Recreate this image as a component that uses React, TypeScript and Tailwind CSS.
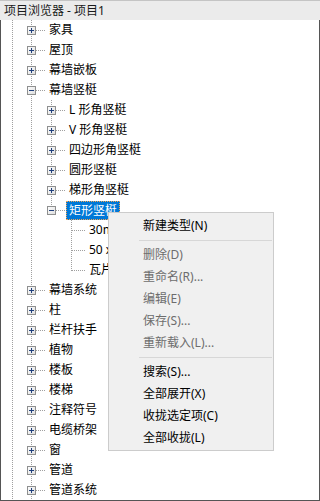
import React from "react";

type Row = {
  label: string;
  level: 1 | 2 | 3;
  box?: "plus" | "minus";
  last?: boolean;
  selected?: boolean;
};

const rows: Row[] = [
  { label: "家具", level: 1, box: "plus" },
  { label: "屋顶", level: 1, box: "plus" },
  { label: "幕墙嵌板", level: 1, box: "plus" },
  { label: "幕墙竖梃", level: 1, box: "minus" },
  { label: "L 形角竖梃", level: 2, box: "plus" },
  { label: "V 形角竖梃", level: 2, box: "plus" },
  { label: "四边形角竖梃", level: 2, box: "plus" },
  { label: "圆形竖梃", level: 2, box: "plus" },
  { label: "梯形角竖梃", level: 2, box: "plus" },
  { label: "矩形竖梃", level: 2, box: "minus", last: true, selected: true },
  { label: "30mm 正方形", level: 3 },
  { label: "50 x 150mm", level: 3 },
  { label: "瓦片", level: 3, last: true },
  { label: "幕墙系统", level: 1, box: "plus" },
  { label: "柱", level: 1, box: "plus" },
  { label: "栏杆扶手", level: 1, box: "plus" },
  { label: "植物", level: 1, box: "plus" },
  { label: "楼板", level: 1, box: "plus" },
  { label: "楼梯", level: 1, box: "plus" },
  { label: "注释符号", level: 1, box: "plus" },
  { label: "电缆桥架", level: 1, box: "plus" },
  { label: "窗", level: 1, box: "plus" },
  { label: "管道", level: 1, box: "plus" },
  { label: "管道系统", level: 1, box: "plus" },
];

const menu: ({ label: string; disabled?: boolean } | "sep")[] = [
  { label: "新建类型(N)" },
  "sep",
  { label: "删除(D)", disabled: true },
  { label: "重命名(R)...", disabled: true },
  { label: "编辑(E)", disabled: true },
  { label: "保存(S)...", disabled: true },
  { label: "重新载入(L)...", disabled: true },
  "sep",
  { label: "搜索(S)..." },
  { label: "全部展开(X)" },
  { label: "收拢选定项(C)" },
  { label: "全部收拢(L)" },
];

const dot = { stroke: "#a0a0a0", strokeDasharray: "1 1", shapeRendering: "crispEdges" as const };

// vertical guide for an ancestor that still has siblings below
function Guide({ w = 20, x = 9, on = true }: { w?: number; x?: number; on?: boolean }) {
  return (
    <svg width={w} height={20} className="block shrink-0">
      {on && <line x1={x + 0.5} y1={0} x2={x + 0.5} y2={20} {...dot} />}
    </svg>
  );
}

function Connector({ box, last }: { box?: "plus" | "minus"; last?: boolean }) {
  return (
    <svg width={20} height={20} className="block shrink-0">
      <defs>
        <linearGradient id="bx" x1="0" y1="0" x2="1" y2="1">
          <stop offset="0" stopColor="#ffffff" />
          <stop offset="1" stopColor="#dcdcdc" />
        </linearGradient>
      </defs>
      <line x1={9.5} y1={0} x2={9.5} y2={last ? 11 : 20} {...dot} />
      <line x1={10} y1={10.5} x2={20} y2={10.5} {...dot} />
      {box && (
        <g shapeRendering="crispEdges">
          <rect x={5.5} y={6.5} width={8} height={8} fill="url(#bx)" stroke="#8e8f8f" />
          <line x1={7} y1={10.5} x2={12} y2={10.5} stroke="#1f3f7c" />
          {box === "plus" && <line x1={9.5} y1={8} x2={9.5} y2={13} stroke="#1f3f7c" />}
        </g>
      )}
    </svg>
  );
}

function Tail() {
  return (
    <svg width={4} height={20} className="block shrink-0">
      <line x1={0} y1={10.5} x2={4} y2={10.5} {...dot} />
    </svg>
  );
}

function TreeRow({ r }: { r: Row }) {
  return (
    <div className="flex h-5 items-center">
      <Guide w={21} x={11} />
      {r.level >= 2 && <Guide />}
      {r.level >= 3 && <Guide on={false} />}
      <Connector box={r.box} last={r.last} />
      <Tail />
      {r.selected ? (
        <span className="h-[19px] self-end whitespace-nowrap bg-[#0078d7] px-[3px] leading-[19px] text-white outline outline-1 -outline-offset-1 outline-dotted outline-[#f7a44f]">
          {r.label}
        </span>
      ) : (
        <span className="whitespace-nowrap px-[3px] leading-5 text-black">{r.label}</span>
      )}
    </div>
  );
}

export default function App() {
  return (
    <div className="relative h-[501px] w-[320px] overflow-hidden bg-white font-[family-name:'Noto_Sans','Noto_Sans_CJK_SC',sans-serif] text-[12px]">
      <div className="flex h-5 items-center border-t border-[#c4c4c4] bg-[#ebebeb] pl-[4px] text-[12px] text-[#1a1a1a]">
        项目浏览器 - 项目1
      </div>
      <div className="h-[481px] border-x border-b border-[#555555]">
        {rows.map((r) => (
          <TreeRow key={r.label} r={r} />
        ))}
      </div>

      <div className="absolute left-[108px] top-[212px] w-[166px] border border-[#cccccc] bg-[#f0f0f0] pb-px pt-[2px]">
        {menu.map((m, i) =>
          m === "sep" ? (
            <div key={i} className="flex h-[7px] items-center pl-[30px] pr-[1px]">
              <div className="h-px w-full bg-[#d7d7d7]" />
            </div>
          ) : (
            <div
              key={i}
              className={`flex h-[22px] items-center whitespace-nowrap pl-[34px] leading-[22px] ${
                m.disabled ? "text-[#6d6d6d]" : "text-black"
              }`}
            >
              {m.label}
            </div>
          )
        )}
      </div>
    </div>
  );
}
